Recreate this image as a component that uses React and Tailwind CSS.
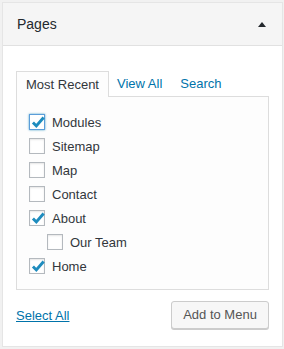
import React from "react";

const pages = [
  { name: "Modules", checked: true, focused: true },
  { name: "Sitemap" },
  { name: "Map" },
  { name: "Contact" },
  { name: "About", checked: true },
  { name: "Our Team", child: true },
  { name: "Home", checked: true },
];

const Checkbox = ({ checked, focused }) => (
  <span
    className={
      "relative w-4 h-4 shrink-0 bg-white border " +
      (focused
        ? "border-[#5b9dd9] shadow-[0_0_2px_rgba(30,140,190,0.8)]"
        : "border-[#b4b9be] shadow-[inset_0_1px_2px_rgba(0,0,0,0.1)]")
    }
  >
    {checked && (
      <svg
        viewBox="0 0 16 16"
        className="absolute left-[-1px] top-[-2px] w-[18px] h-[18px]"
      >
        <path d="M3.5 8.5 L6.5 11.5 L13 4" fill="none" stroke="#1e8cbe" strokeWidth="2.6" />
      </svg>
    )}
  </span>
);

export default function App() {
  return (
    <div
      className="w-[284px] h-[349px] bg-[#f1f1f1] pt-[2px] pl-[2px]"
      style={{ fontFamily: '"Liberation Sans", Arial, sans-serif' }}
    >
      <div className="w-[281px] h-[345px] bg-white border border-[#e5e5e5] flex flex-col">
        {/* Header */}
        <div className="h-[43px] bg-[#f5f5f5] border-b border-[#e1e1e1] flex items-center justify-between pl-[14px] pr-[16px]">
          <span className="text-[14px] text-[#23282d]">Pages</span>
          <span className="w-0 h-0 border-l-[4px] border-r-[4px] border-b-[5px] border-l-transparent border-r-transparent border-b-[#23282d]" />
        </div>

        {/* Body */}
        <div className="px-[13px] pt-[25px]">
          <div className="flex items-end text-[13px] h-[25px]">
            <div className="h-[26px] px-[9px] pt-px flex items-center border border-b-0 border-[#dddddd] bg-[#fdfdfd] text-[#32373c] relative z-10 -mb-px">
              Most Recent
            </div>
            <a className="ml-[8px] h-[25px] pt-px flex items-center text-[#0073aa]">View All</a>
            <a className="ml-[18px] h-[25px] pt-px flex items-center text-[#0073aa]">Search</a>
          </div>
          <div className="w-[253px] border border-[#dddddd] bg-[#fdfdfd] pt-[13px] pb-[11px] pl-[12px]">
            {pages.map((p) => (
              <label
                key={p.name}
                className={"h-6 flex items-center text-[13px] text-[#32373c] " + (p.child ? "pl-[18px]" : "")}
              >
                <Checkbox checked={p.checked} focused={p.focused} />
                <span className="ml-[7px] pt-px">{p.name}</span>
              </label>
            ))}
          </div>

          <div className="flex items-center justify-between mt-[11px] w-[253px]">
            <a className="text-[13px] text-[#0073aa] underline pt-[2px]">Select All</a>
            <button className="h-[28px] w-[98px] text-[13px] text-[#555] bg-[#f7f7f7] border border-[#cccccc] rounded-[3px] shadow-[0_1px_0_#cccccc]">
              Add to Menu
            </button>
          </div>
        </div>
      </div>
    </div>
  );
}
